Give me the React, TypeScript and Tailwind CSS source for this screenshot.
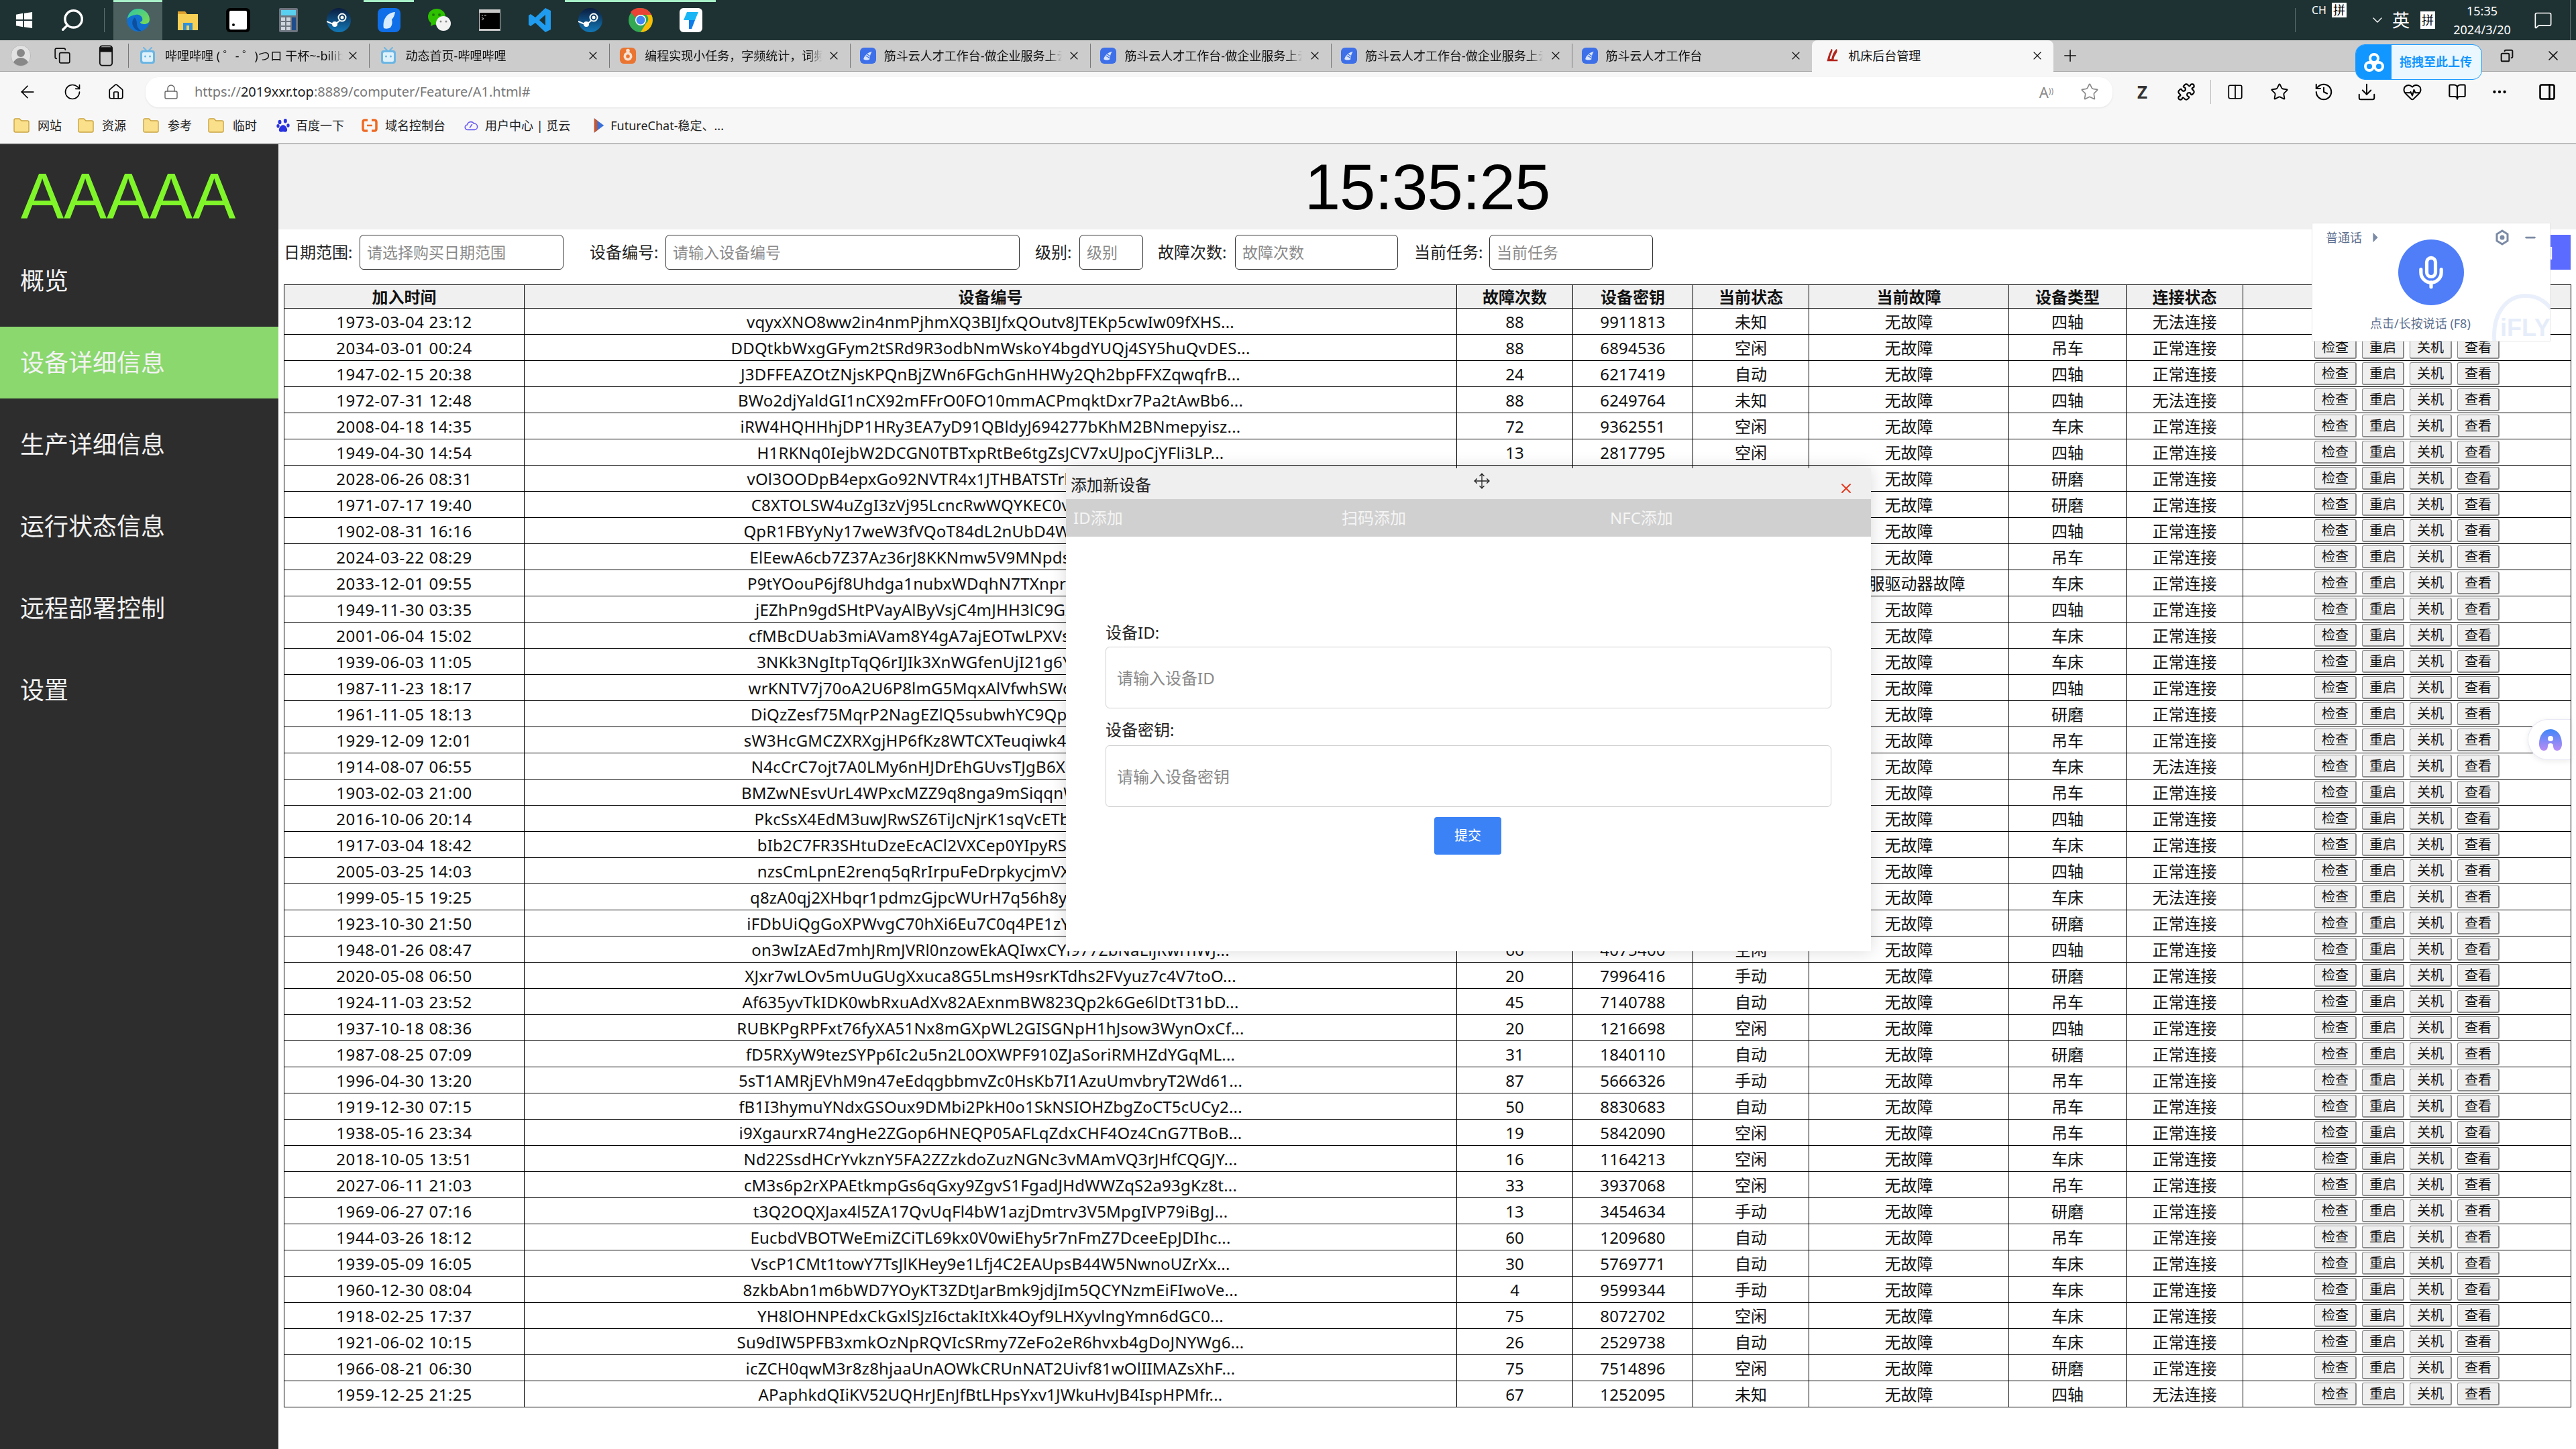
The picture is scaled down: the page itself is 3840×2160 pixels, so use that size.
import React from "react";
import { ArrowLeft, RotateCw, Home, Lock, Star, Puzzle, Columns2, History, Download, HeartPulse, BookOpen, MoreHorizontal, PanelRight, Copy, Mic, Minus, Move, Plus, X, ChevronDown, MessageSquare, Search } from "lucide-react";

const raw = `1973-03-04 23:12|vqyxXNO8ww2in4nmPjhmXQ3BIJfxQOutv8JTEKp5cwIw09fXHS...|88|9911813|未知|无故障|四轴|无法连接
2034-03-01 00:24|DDQtkbWxgGFym2tSRd9R3odbNmWskoY4bgdYUQj4SY5huQvDES...|88|6894536|空闲|无故障|吊车|正常连接
1947-02-15 20:38|J3DFFEAZOtZNjsKPQnBjZWn6FGchGnHHWy2Qh2bpFFXZqwqfrB...|24|6217419|自动|无故障|四轴|正常连接
1972-07-31 12:48|BWo2djYaldGI1nCX92mFFrO0FO10mmACPmqktDxr7Pa2tAwBb6...|88|6249764|未知|无故障|四轴|无法连接
2008-04-18 14:35|iRW4HQHHhjDP1HRy3EA7yD91QBldyJ694277bKhM2BNmepyisz...|72|9362551|空闲|无故障|车床|正常连接
1949-04-30 14:54|H1RKNq0IejbW2DCGN0TBTxpRtBe6tgZsJCV7xUJpoCjYFli3LP...|13|2817795|空闲|无故障|四轴|正常连接
2028-06-26 08:31|vOl3OODpB4epxGo92NVTR4x1JTHBATSTrkQm7dZs2LfYc8wUe...|41|5520713|空闲|无故障|研磨|正常连接
1971-07-17 19:40|C8XTOLSW4uZgI3zVj95LcncRwWQYKEC0vXb2TnH6pRa7sJd1F...|57|3318206|自动|无故障|研磨|正常连接
1902-08-31 16:16|QpR1FBYyNy17weW3fVQoT84dL2nUbD4WkE9sXc6ZtGm3HjA0r...|29|7045162|手动|无故障|四轴|正常连接
2024-03-22 08:29|ElEewA6cb7Z37Az36rJ8KKNmw5V9MNpdssT2yLq4HfUx1GcRz...|63|2281947|自动|无故障|吊车|正常连接
2033-12-01 09:55|P9tYOouP6jf8Uhdga1nubxWDqhN7TXnprK3vZs5LmE2cGy4Ab...|12|8457390|未知|伺服驱动器故障|车床|正常连接
1949-11-30 03:35|jEZhPn9gdSHtPVayAlByVsjC4mJHH3lC9GxT7wQ2rUe6Nk1Df...|78|6190534|空闲|无故障|四轴|正常连接
2001-06-04 15:02|cfMBcDUab3miAVam8Y4gA7ajEOTwLPXVs5Hq2ZnR9yKt6GuJe...|35|4726081|手动|无故障|车床|正常连接
1939-06-03 11:05|3NKk3NgItpTqQ6rIJIk3XnWGfenUjI21g6Ya7DcLv8SzP0mHw...|90|1937625|自动|无故障|车床|正常连接
1987-11-23 18:17|wrKNTV7j70oA2U6P8lmG5MqxAlVfwhSWoE3bRy9ZtJc1HnD4g...|46|5803274|空闲|无故障|四轴|正常连接
1961-11-05 18:13|DiQzZesf75MqrP2NagEZlQ5subwhYC9QpEV6kTx3LmG8jRn1F...|21|9264018|手动|无故障|研磨|正常连接
1929-12-09 12:01|sW3HcGMCZXRXgjHP6fKz8WTCXTeuqiwk4Ay7Dn2VbL5mQoE9r...|84|3650792|自动|无故障|吊车|正常连接
1914-08-07 06:55|N4cCrC7ojt7A0LMy6nHJDrEhGUvsTJgB6Xp1Zk9QaW3fYm2Sd...|52|7418936|未知|无故障|车床|无法连接
1903-02-03 21:00|BMZwNEsvUrL4WPxcMZZ9q8nga9mSiqqnWy5Hk3TfG7Dj1oRe2...|17|2095847|空闲|无故障|吊车|正常连接
2016-10-06 20:14|PkcSsX4EdM3uwJRwSZ6TiJcNjrK1sqVcETb8Yg2Ln7Ha5mQxD...|69|8136450|自动|无故障|四轴|正常连接
1917-03-04 18:42|bIb2C7FR3SHtuDzeEcACl2VXCep0YIpyRSMk6Wn9Gq4ZjLf1T...|38|4572619|手动|无故障|车床|正常连接
2005-03-25 14:03|nzsCmLpnE2renq5qRrIrpuFeDrpkycjmVXa7Wh3GtB1oJ9Ys6...|95|6801375|空闲|无故障|四轴|正常连接
1999-05-15 19:25|q8zA0qj2XHbqr1pdmzGjpcWUrH7q56h8y8LfT3nKv9EsDg4Mc...|26|1358904|未知|无故障|车床|无法连接
1923-10-30 21:50|iFDbUiQgGoXPWvgC70hXi6Eu7C0q4PE1zYm3Ra5SkLn8HwTd2...|73|9720168|自动|无故障|研磨|正常连接
1948-01-26 08:47|on3wIzAEd7mhJRmJVRl0nzowEkAQIwxCYi977ZbNaLijRwrnWJ...|66|4075400|空闲|无故障|四轴|正常连接
2020-05-08 06:50|XJxr7wLOv5mUuGUgXxuca8G5LmsH9srKTdhs2FVyuz7c4V7toO...|20|7996416|手动|无故障|研磨|正常连接
1924-11-03 23:52|Af635yvTkIDK0wbRxuAdXv82AExnmBW823Qp2k6Ge6lDtT31bD...|45|7140788|自动|无故障|吊车|正常连接
1937-10-18 08:36|RUBKPgRPFxt76fyXA51Nx8mGXpWL2GISGNpH1hJsow3WynOxCf...|20|1216698|空闲|无故障|四轴|正常连接
1987-08-25 07:09|fD5RXyW9tezSYPp6Ic2u5n2L0OXWPF910ZJaSoriRMHZdYGqML...|31|1840110|自动|无故障|研磨|正常连接
1996-04-30 13:20|5sT1AMRjEVhM9n47eEdqgbbmvZc0HsKb7I1AzuUmvbryT2Wd61...|87|5666326|手动|无故障|吊车|正常连接
1919-12-30 07:15|fB1I3hymuYNdxGSOux9DMbi2PkH0o1SkNSIOHZbgZoCT5cUCy2...|50|8830683|自动|无故障|吊车|正常连接
1938-05-16 23:34|i9XgaurxR74ngHe2ZGop6HNEQP05AFLqZdxCHF4Oz4CnG7TBoB...|19|5842090|空闲|无故障|吊车|正常连接
2018-10-05 13:51|Nd22SsdHCrYvkznY5FA2ZZzkdoZuzNGNc3vMAmVQ3rJHfCQGJY...|16|1164213|空闲|无故障|车床|正常连接
2027-06-11 21:03|cM3s6p2rXPAEtkmpGs6qGxy9ZgvS1FgadJHdWWZqS2a93gKz8t...|33|3937068|空闲|无故障|吊车|正常连接
1969-06-27 07:16|t3Q2OQXJax4l5ZA17QvUqFl4bW1azjDmtrv3V5MpgIVP79iBgJ...|13|3454634|手动|无故障|研磨|正常连接
1944-03-26 18:12|EucbdVBOTWeEmiZCiTL69kx0V0wiEhy5r7nFmZ7DceeEpJDIhc...|60|1209680|自动|无故障|吊车|正常连接
1939-05-09 16:05|VscP1CMt1towY7TsJlKHey9e1Lfj4C2EAUpsB44W5NwnoUZrXx...|30|5769771|自动|无故障|车床|正常连接
1960-12-30 08:04|8zkbAbn1m6bWD7YOyKT3ZDtJarBmk9jdjIm5QCYNzmEiFIwoVe...|4|9599344|手动|无故障|车床|正常连接
1918-02-25 17:37|YH8lOHNPEdxCkGxlSJzI6ctakItXk4Oyf9LHXyvlngYmn6dGC0...|75|8072702|空闲|无故障|车床|正常连接
1921-06-02 10:15|Su9dIW5PFB3xmkOzNpRQVIcSRmy7ZeFo2eR6hvxb4gDoJNYWg6...|26|2529738|自动|无故障|车床|正常连接
1966-08-21 06:30|icZCH0qwM3r8z8hjaaUnAOWkCRUnNAT2Uivf81wOlIIMAZsXhF...|75|7514896|空闲|无故障|研磨|正常连接
1959-12-25 21:25|APaphkdQIiKV52UQHrJEnJfBtLHpsYxv1JWkuHvJB4IspHPMfr...|67|1252095|未知|无故障|四轴|无法连接`;
const rows = raw.split("\n").map((l) => l.split("|"));
const cols = ["加入时间", "设备编号", "故障次数", "设备密钥", "当前状态", "当前故障", "设备类型", "连接状态", ""];
const widths = ["w-[358px]", "w-[1390px]", "w-[173px]", "w-[179px]", "w-[173px]", "w-[298px]", "w-[175px]", "w-[174px]", "w-[489px]"];
const track = ["tracking-[0.6px]", "tracking-[0.2px]", "", "tracking-[0.2px]", "", "", "", ""];

const Bili = () => (
  <svg viewBox="0 0 28 28" className="w-[28px] h-[28px] shrink-0"><path d="M8 2l4 4M20 2l-4 4" stroke="#6cb6e4" strokeWidth="2" strokeLinecap="round"/><rect x="3" y="6" width="22" height="20" rx="4" fill="#6cb6e4"/><rect x="6" y="9" width="16" height="14" rx="2" fill="#dff1fb"/><circle cx="10.5" cy="15" r="1.5" fill="#6cb6e4"/><circle cx="17.5" cy="15" r="1.5" fill="#6cb6e4"/></svg>
);
const Csdn = () => (
  <svg viewBox="0 0 28 28" className="w-[26px] h-[28px] shrink-0"><rect x="1" y="1" width="26" height="26" rx="7" fill="#ea7431"/><circle cx="14" cy="15" r="7" fill="#f8e2d2"/><circle cx="14" cy="6" r="3" fill="#f8e2d2"/><circle cx="14" cy="15" r="3" fill="#ea7431"/></svg>
);
const Jd = () => (
  <svg viewBox="0 0 28 28" className="w-[24px] h-[28px] shrink-0"><rect x="0" y="0" width="28" height="28" rx="7" fill="#3d6fe8"/><path d="M6 20c2-7 8-12 15-13-3 3-4 9-4 13-3 2-8 2-11 0z" fill="#dbe6ff"/><path d="M10 14l8 5M12 11l7 5" stroke="#3d6fe8" strokeWidth="1.4"/></svg>
);
const Red = () => (
  <svg viewBox="0 0 24 28" className="w-[20px] h-[28px] shrink-0"><path d="M3 24C5 14 8 7 11 2c2 0 2 3 1 5-2 5-4 9-4 13h3c1-6 4-14 9-18 2 2 1 6-1 9-2 3-4 6-4 10h7v3z" fill="#b3261e"/></svg>
);

const tabs: [React.ReactNode, string][] = [
  [<Bili />, "哔哩哔哩 ( ゜- ゜)つロ 干杯~-bilibili"],
  [<Bili />, "动态首页-哔哩哔哩"],
  [<Csdn />, "编程实现小任务，字频统计，词频统计"],
  [<Jd />, "筋斗云人才工作台-做企业服务上云"],
  [<Jd />, "筋斗云人才工作台-做企业服务上云"],
  [<Jd />, "筋斗云人才工作台-做企业服务上云"],
  [<Jd />, "筋斗云人才工作台"],
];

const Edge = () => (
  <svg viewBox="0 0 36 36" className="w-[36px] h-[36px]"><defs><linearGradient id="eg" x1="0" y1="0" x2="1" y2="1"><stop offset="0" stopColor="#2fc5a0"/><stop offset="1" stopColor="#7ddc52"/></linearGradient></defs><circle cx="18" cy="18" r="17" fill="#1170cf"/><path d="M2 16C3 7 10 1 18 1c9 0 17 7 17 16 0 5-4 7-8 7-3 0-6-1-6-3 3-1 4-3 3-6-1-4-6-6-10-5-6 1-10 3-12 6z" fill="url(#eg)"/><path d="M13 14c-4 3-5 9-2 14 2 4 7 7 12 6-4-2-7-6-7-11 0-3-1-6-3-9z" fill="#0c4f9e"/></svg>
);
const Files = () => (
  <svg viewBox="0 0 36 36" className="w-[36px] h-[36px]"><path d="M3 5h11l3 4h16v5H3z" fill="#e0a32e"/><rect x="3" y="9" width="30" height="24" fill="#f7cf55"/><rect x="11" y="22" width="14" height="11" fill="#2f8fd8"/><rect x="16" y="26" width="4" height="7" fill="#f7cf55"/></svg>
);
const Slate = () => (
  <svg viewBox="0 0 36 36" className="w-[36px] h-[36px]"><rect x="0" y="0" width="36" height="36" rx="6" fill="#000"/><rect x="5" y="4" width="26" height="28" rx="2" fill="#fff"/><circle cx="11" cy="25" r="2" fill="#000"/></svg>
);
const Calc = () => (
  <svg viewBox="0 0 36 36" className="w-[36px] h-[36px]"><rect x="4" y="0" width="28" height="36" rx="2" fill="#6d7580"/><rect x="7" y="3" width="22" height="8" fill="#5ad0f0"/><g fill="#cfd5dc"><rect x="7" y="14" width="6" height="5"/><rect x="15" y="14" width="6" height="5"/><rect x="7" y="21" width="6" height="5"/><rect x="15" y="21" width="6" height="5"/><rect x="7" y="28" width="6" height="5"/><rect x="15" y="28" width="6" height="5"/></g><rect x="23" y="14" width="6" height="19" fill="#1f4d8c"/></svg>
);
const Steam = () => (
  <svg viewBox="0 0 36 36" className="w-[36px] h-[36px]"><defs><linearGradient id="st" x1="0" y1="0" x2="0" y2="1"><stop offset="0" stopColor="#0b1c3e"/><stop offset="1" stopColor="#1279b8"/></linearGradient></defs><circle cx="18" cy="18" r="18" fill="url(#st)"/><circle cx="23" cy="14" r="5.5" fill="none" stroke="#fff" strokeWidth="2"/><circle cx="23" cy="14" r="2.5" fill="#fff"/><circle cx="12" cy="24" r="4" fill="#fff"/><path d="M0 20l12 5 8-7" stroke="#fff" strokeWidth="2" fill="none"/></svg>
);
const Feather = () => (
  <svg viewBox="0 0 36 36" className="w-[36px] h-[36px]"><rect x="1" y="0" width="34" height="36" rx="8" fill="#0f6fe8"/><path d="M10 30C8 18 14 7 27 6c-1 5-2 8-5 11 1 4 1 8-2 12-3 2-7 2-10 1z" fill="#d8ecff"/></svg>
);
const Wechat = () => (
  <svg viewBox="0 0 36 36" className="w-[36px] h-[36px]"><ellipse cx="14" cy="13" rx="13" ry="12" fill="#2dc100"/><path d="M6 21l-1 6 6-3z" fill="#2dc100"/><ellipse cx="24" cy="23" rx="11" ry="11" fill="#f2f2f2"/><circle cx="9" cy="10" r="2" fill="#1e7d00"/><circle cx="18" cy="10" r="2" fill="#1e7d00"/><circle cx="20" cy="20" r="1.5" fill="#888"/><circle cx="28" cy="20" r="1.5" fill="#888"/></svg>
);
const Cmd = () => (
  <svg viewBox="0 0 36 36" className="w-[36px] h-[36px]"><rect x="2" y="2" width="32" height="32" fill="#c8c8c8"/><rect x="3" y="7" width="30" height="24" fill="#000"/><path d="M6 11h2M10 11h3M6 14l3 2-3 2" stroke="#ccc" fill="none"/></svg>
);
const Code = () => (
  <svg viewBox="0 0 36 36" className="w-[36px] h-[36px]"><path d="M26 0l8 4v28l-8 4-15-14-7 5-3-2V11l3-2 7 5zM26 10l-9 8 9 8z" fill="#1f9cf0"/></svg>
);
const Chrome = () => (
  <svg viewBox="0 0 36 36" className="w-[36px] h-[36px]"><circle cx="18" cy="18" r="18" fill="#34a853"/><path d="M18 0a18 18 0 0 1 16 10H18a8 8 0 0 0-8 4L3 6A18 18 0 0 1 18 0z" fill="#ea4335"/><path d="M34 10a18 18 0 0 1-16 26l8-13a8 8 0 0 0 0-13z" fill="#fbbc05"/><circle cx="18" cy="18" r="8" fill="#fff"/><circle cx="18" cy="18" r="6.5" fill="#4285f4"/></svg>
);
const Feishu = () => (
  <svg viewBox="0 0 36 36" className="w-[36px] h-[36px]"><rect x="1" y="0" width="34" height="36" rx="6" fill="#fff"/><path d="M12 6h17l-5 12H7z" fill="#19b6f6"/><path d="M15 18h9l-5 13h-4z" fill="#0e7de8"/></svg>
);
const Win = () => (
  <svg viewBox="0 0 28 28" className="w-[26px] h-[26px]"><path d="M1 5l11-2v10H1zM14 3l13-2v12H14zM1 15h11v10L1 23zM14 15h13v12l-13-2z" fill="#fff"/></svg>
);
const Folder = () => (
  <svg viewBox="0 0 24 24" className="w-[24px] h-[24px] shrink-0"><path d="M1 4q0-2 2-2h6l3 3h9q2 0 2 2v13q0 2-2 2H3q-2 0-2-2z" fill="#fbe08c" stroke="#c9a33e" strokeWidth="1.4"/></svg>
);
const Baidu = () => (
  <svg viewBox="0 0 24 28" className="w-[20px] h-[26px] shrink-0" fill="#2932e1"><ellipse cx="6" cy="8" rx="3" ry="4"/><ellipse cx="16" cy="6" rx="3" ry="4"/><ellipse cx="3" cy="15" rx="2.6" ry="3.4"/><ellipse cx="21" cy="14" rx="2.6" ry="3.4"/><path d="M12 13c4 0 9 7 7 11-2 3-5 1-7 1s-5 2-7-1c-2-4 3-11 7-11z"/></svg>
);
const Ali = () => (
  <svg viewBox="0 0 24 24" className="w-[24px] h-[24px] shrink-0" fill="none" stroke="#ee6a24" strokeWidth="3.5"><path d="M9 4H5q-3 0-3 3v10q0 3 3 3h4M15 4h4q3 0 3 3v10q0 3-3 3h-4"/><path d="M8 12h8" strokeWidth="2.5"/></svg>
);
const Cloud = () => (
  <svg viewBox="0 0 24 24" className="w-[22px] h-[22px] shrink-0" fill="none" stroke="#6a5cf0" strokeWidth="1.8"><path d="M7 19a4 4 0 0 1-1-8 6 6 0 0 1 11-2 5 5 0 0 1 1 10z"/><path d="M10 16l4-6"/></svg>
);
const Play = () => (
  <svg viewBox="0 0 20 28" className="w-[18px] h-[28px] shrink-0"><path d="M2 2l16 12-16 12z" fill="#3b6fd8"/><path d="M2 2v24l5-4V6z" fill="#c8552b"/></svg>
);
const TabsIcon = () => (
  <svg viewBox="0 0 24 36" className="w-[22px] h-[34px]" fill="none" stroke="#111" strokeWidth="2"><rect x="2" y="2" width="20" height="32" rx="4"/><path d="M3 5h18v6H3z" fill="#111"/></svg>
);

function TaskIcon({ on, children }: { on?: boolean; children: React.ReactNode }) {
  return (
    <div className={`w-[75px] h-[60px] flex items-center justify-center border-t-[3px] ${on ? "border-[#a8f0c8]" : "border-transparent"}`}>
      <div className="-mt-[3px]">{children}</div>
    </div>
  );
}

function TaskBar() {
  return (
    <div className="h-[60px] bg-[#1f3233] flex items-center shrink-0 text-white">
      <div className="w-[72px] flex justify-center"><Win /></div>
      <div className="w-[72px] flex justify-center"><Search size={38} strokeWidth={2.2} className="-scale-x-100" /></div>
      <div className="w-px h-[36px] bg-[#617070] ml-[11px] mr-[13px]" />
      <div className="w-[73px] h-[60px] bg-[#4c6060] border-t-[3px] border-[#a8f0c8] flex items-center justify-center"><div className="-mt-[3px]"><Edge /></div></div>
      <TaskIcon><Files /></TaskIcon>
      <TaskIcon><Slate /></TaskIcon>
      <TaskIcon><Calc /></TaskIcon>
      <TaskIcon><Steam /></TaskIcon>
      <TaskIcon on><Feather /></TaskIcon>
      <TaskIcon><Wechat /></TaskIcon>
      <TaskIcon><Cmd /></TaskIcon>
      <TaskIcon><Code /></TaskIcon>
      <TaskIcon on><Steam /></TaskIcon>
      <TaskIcon on><Chrome /></TaskIcon>
      <TaskIcon on><Feishu /></TaskIcon>
      <div className="ml-auto flex items-center h-[60px] pr-[8px]">
        <div className="w-px h-[36px] bg-[#617070] mr-[24px]" />
        <div className="flex items-start h-[60px] pt-[4px] gap-[8px] w-[86px]">
          <span className="text-[16px] leading-[22px]">CH</span>
          <span className="bg-white text-black text-[18px] leading-[22px] px-[2px]">拼</span>
        </div>
        <ChevronDown size={24} strokeWidth={1.4} />
        <span className="text-[26px] ml-[10px]">英</span>
        <span className="bg-white text-black text-[18px] leading-[26px] px-[2px] ml-[16px]">拼</span>
        <div className="flex flex-col items-center w-[96px] ml-[22px] text-[18px] leading-[28px]">
          <span>15:35</span>
          <span>2024/3/20</span>
        </div>
        <MessageSquare size={28} strokeWidth={1.4} className="ml-[29px]" />
        <div className="w-px h-[60px] bg-[#617070] ml-[26px]" />
      </div>
    </div>
  );
}

function TabBar() {
  return (
    <div className="h-[47px] bg-[#cccccc] flex items-center shrink-0 border-b border-[#aaaaaa] text-[18px] text-[#111]">
      <div className="w-[62px] flex justify-center">
        <div className="w-[30px] h-[32px] rounded-full bg-[#e2e2e2] border border-[#bbb] flex flex-col items-center justify-end overflow-hidden">
          <div className="w-[12px] h-[12px] rounded-full bg-[#888]" />
          <div className="w-[24px] h-[12px] rounded-t-full bg-[#888] mt-px" />
        </div>
      </div>
      <div className="w-[62px] flex justify-center"><Copy size={26} strokeWidth={1.6} /></div>
      <div className="w-[67px] flex justify-center"><TabsIcon /></div>
      {tabs.map(([ic, t], i) => (
        <div key={i} className="w-[358.6px] h-[36px] shrink-0 flex items-center border-l border-[#777] pl-[14px] pr-[14px]">
          {ic}
          <span className="ml-[12px] w-[265px] whitespace-nowrap overflow-hidden [mask-image:linear-gradient(to_right,#000_92%,transparent)]">{t}</span>
          <X size={20} strokeWidth={1.4} className="ml-auto" />
        </div>
      ))}
      <div className="w-[360px] h-[47px] shrink-0 bg-[#f7f7f7] rounded-t-[8px] flex items-center pl-[20px] pr-[14px]">
        <Red />
        <span className="ml-[14px]">机床后台管理</span>
        <X size={20} strokeWidth={1.4} className="ml-auto" />
      </div>
      <Plus size={28} strokeWidth={1.4} className="ml-[11px]" />
      <Copy size={20} strokeWidth={2.4} className="ml-[627px] -scale-x-100" />
      <X size={24} strokeWidth={1.6} className="ml-[47px]" />
    </div>
  );
}

function AddressBar() {
  return (
    <div className="bg-[#f7f7f7] shrink-0 border-b-2 border-[#bdbdbd] h-[108px]">
      <div className="h-[60px] flex items-center">
        <div className="w-[82px] flex justify-center"><ArrowLeft size={30} strokeWidth={1.4} /></div>
        <div className="w-[52px] flex justify-center"><RotateCw size={28} strokeWidth={1.4} /></div>
        <div className="w-[78px] flex justify-center"><Home size={26} strokeWidth={1.6} /></div>
        <div className="ml-[5px] w-[2932px] h-[45px] rounded-[20px] bg-white flex items-center shadow-[0_1px_3px_rgba(0,0,0,0.08)]">
          <Lock size={24} strokeWidth={1.4} className="ml-[26px] text-[#666]" />
          <span className="ml-[23px] text-[20px] text-[#777]">https://<span className="text-[#222]">2019xxr.top</span>:8889/computer/Feature/A1.html#</span>
          <span className="ml-auto text-[22px] text-[#888]">A<sup className="text-[12px]">))</sup></span>
          <Star size={28} strokeWidth={1.4} className="ml-[40px] mr-[20px] text-[#888]" />
        </div>
        <span className="ml-[37px] text-[26px] font-bold text-[#333]">Z</span>
        <Puzzle size={28} strokeWidth={1.8} className="ml-[44px]" />
        <div className="w-px h-[36px] bg-[#bbb] ml-[22px]" />
        <Columns2 size={26} strokeWidth={1.6} className="ml-[23px]" />
        <Star size={28} strokeWidth={1.6} className="ml-[39px]" />
        <History size={30} strokeWidth={1.6} className="ml-[37px]" />
        <Download size={30} strokeWidth={1.6} className="ml-[34px]" />
        <HeartPulse size={30} strokeWidth={1.6} className="ml-[38px]" />
        <BookOpen size={28} strokeWidth={1.8} className="ml-[38px]" />
        <MoreHorizontal size={26} strokeWidth={2} className="ml-[36px]" />
        <PanelRight size={28} strokeWidth={2.2} className="ml-[44px]" />
      </div>
      <div className="h-[40px] flex items-center text-[18px] text-[#222] pl-[20px]">
        <Folder /><span className="ml-[12px]">网站</span>
        <span className="ml-[24px]"><Folder /></span><span className="ml-[12px]">资源</span>
        <span className="ml-[25px]"><Folder /></span><span className="ml-[13px]">参考</span>
        <span className="ml-[24px]"><Folder /></span><span className="ml-[13px]">临时</span>
        <span className="ml-[29px]"><Baidu /></span><span className="ml-[9px]">百度一下</span>
        <span className="ml-[26px]"><Ali /></span><span className="ml-[11px]">域名控制台</span>
        <span className="ml-[27px]"><Cloud /></span><span className="ml-[10px]">用户中心 | 觅云</span>
        <span className="ml-[34px]"><Play /></span><span className="ml-[8px]">FutureChat-稳定、...</span>
      </div>
    </div>
  );
}

const nav = ["概览", "设备详细信息", "生产详细信息", "运行状态信息", "远程部署控制", "设置"];
function Sidebar() {
  return (
    <div className="w-[415px] h-full bg-[#2d2d2d] shrink-0">
      <div className="h-[150px] pl-[31px] pt-[22px]">
        <div className="text-[96px] leading-[110px] text-[#7ff52a] [font-family:'Liberation_Sans',sans-serif]">AAAAA</div>
      </div>
      <div className="flex flex-col gap-[15px]">
        {nav.map((n, i) => (
          <div key={n} className={`h-[107px] flex items-center pl-[30px] text-[36px] text-[#f2f2f2] ${i === 1 ? "bg-[#8ad86e]" : ""}`}>{n}</div>
        ))}
      </div>
    </div>
  );
}

const inp = "h-[52px] border border-[#333] rounded-[6px] pl-[10px] outline-none bg-white placeholder:text-[#8a8a8a] text-[23px]";
function Filters() {
  return (
    <div className="h-[82px] flex items-start pt-[8px] pl-[8px] text-[24px] text-[#222]">
      <div className="h-[52px] flex items-center w-[113px]">日期范围:</div>
      <input className={`${inp} w-[304px]`} placeholder="请选择购买日期范围" />
      <div className="h-[52px] flex items-center w-[113px] ml-[39px]">设备编号:</div>
      <input className={`${inp} w-[528px]`} placeholder="请输入设备编号" />
      <div className="h-[52px] flex items-center w-[66px] ml-[23px]">级别:</div>
      <input className={`${inp} w-[95px]`} placeholder="级别" />
      <div className="h-[52px] flex items-center w-[115px] ml-[22px]">故障次数:</div>
      <input className={`${inp} w-[243px]`} placeholder="故障次数" />
      <div className="h-[52px] flex items-center w-[112px] ml-[24px]">当前任务:</div>
      <input className={`${inp} w-[244px]`} placeholder="当前任务" />
      <button className="ml-auto mr-[8px] w-[130px] h-[52px] bg-[#5b6bff] text-white text-[24px] text-right pr-[26px]">添加</button>
    </div>
  );
}

function DataTable() {
  return (
    <table className="table-fixed border-collapse ml-[8px] w-[3409px] text-[24px] text-[#111] text-center">
      <colgroup>{widths.map((w, i) => <col key={i} className={w} />)}</colgroup>
      <thead>
        <tr className="h-[35px] bg-[#f0f0f0]">
          {cols.map((c, i) => <th key={i} className="border border-black font-bold leading-[30px] p-0 pt-[2px]">{c}</th>)}
        </tr>
      </thead>
      <tbody>
        {rows.map((r, ri) => (
          <tr key={ri} className="h-[39px]">
            {r.map((c, i) => <td key={i} className={`border border-black p-0 pt-[2px] leading-[30px] whitespace-nowrap overflow-hidden ${track[i]}`}>{c}</td>)}
            <td className="border border-black p-0">
              <div className="flex justify-center gap-[8px]">
                {["检查", "重启", "关机", "查看"].map((b) => (
                  <button key={b} className="w-[63px] h-[34px] bg-[#efefef] border border-[#8a8a8a] rounded-[3px] text-[20px] leading-[30px] text-[#111] border-b-2 border-r-2">{b}</button>
                ))}
              </div>
            </td>
          </tr>
        ))}
      </tbody>
    </table>
  );
}

function Modal() {
  return (
    <div className="absolute left-[1589px] top-[698px] w-[1200px] h-[720px] bg-white shadow-[0_0_24px_rgba(0,0,0,0.15)] text-[24px]">
      <div className="h-[46px] bg-[#efefef] flex items-center px-[7px] text-[#222] relative">
        <span className="pt-[4px]">添加新设备</span>
        <Move size={26} strokeWidth={1.2} className="absolute left-[607px] top-[6px]" />
        <X size={24} strokeWidth={2} className="ml-auto mr-[18px] mt-[14px] text-[#e5391f]" />
      </div>
      <div className="h-[56px] bg-[#d0d0d0] flex items-center text-[#f5f5f5]">
        <div className="w-[400px] pl-[11px]">ID添加</div>
        <div className="w-[400px] pl-[11px]">扫码添加</div>
        <div className="w-[400px] pl-[11px]">NFC添加</div>
      </div>
      <div className="px-[59px] pt-[127px] text-[#222]">
        <div className="h-[37px] leading-[32px]">设备ID:</div>
        <input className="w-full h-[92px] border border-[#cfcfcf] rounded-[6px] pl-[16px] outline-none placeholder:text-[#8a8a8a]" placeholder="请输入设备ID" />
        <div className="h-[55px] pt-[16px] leading-[32px]">设备密钥:</div>
        <input className="w-full h-[92px] border border-[#cfcfcf] rounded-[6px] pl-[16px] outline-none placeholder:text-[#8a8a8a]" placeholder="请输入设备密钥" />
        <div className="flex justify-center mt-[15px]">
          <button className="w-[100px] h-[56px] bg-[#3b82f6] rounded-[4px] text-white text-[20px] -translate-x-[1px]">提交</button>
        </div>
      </div>
    </div>
  );
}

function Ifly() {
  return (
    <div className="absolute left-[3446px] top-[332px] w-[356px] h-[177px] bg-white border border-[#e6e6e6] overflow-hidden text-[#5d6f8e] text-[18px]">
      <svg viewBox="0 0 96 80" className="absolute left-[266px] top-[104px] w-[96px] h-[80px]" fill="none" stroke="#eaf0fb" strokeWidth="6"><path d="M6 78C0 30 24 4 52 4c18 0 30 8 40 22"/></svg>
      <div className="absolute left-[280px] top-[136px] text-[36px] leading-[40px] font-bold text-[#e6edfa] [font-family:'Liberation_Sans',sans-serif]">iFLY</div>
      <div className="relative flex items-center pt-[4px] pl-[20px] pr-[18px] h-[38px]">
        <span>普通话</span>
        <svg viewBox="0 0 8 20" className="w-[8px] h-[18px] ml-[16px]"><path d="M0 2l8 8-8 8z" fill="#7b8aa5"/></svg>
        <svg viewBox="0 0 20 24" className="w-[20px] h-[24px] ml-auto" fill="none" stroke="#7b8aa5" strokeWidth="3"><path d="M10 2l8 5v10l-8 5-8-5V7z"/><circle cx="10" cy="12" r="2" fill="#7b8aa5"/></svg>
        <Minus size={22} strokeWidth={3} className="ml-[21px] text-[#7b8aa5]" />
      </div>
      <div className="relative flex justify-center -mt-[14px]">
        <div className="w-[98px] h-[98px] rounded-full bg-[#4f7ef8] flex items-center justify-center"><Mic size={52} strokeWidth={2.4} color="#fff" /></div>
      </div>
      <div className="relative mt-[15px] pl-[86px] leading-[24px]">点击/长按说话 (F8)</div>
    </div>
  );
}

export default function App() {
  return (
    <div className="relative w-screen h-screen overflow-hidden flex flex-col bg-white [font-family:'Noto_Sans','Noto_Sans_CJK_SC',sans-serif]">
      <TaskBar />
      <TabBar />
      <AddressBar />
      <div className="flex-1 flex min-h-0">
        <Sidebar />
        <div className="flex-1 min-w-0">
          <div className="h-[127px] bg-[#f0f0f0] flex items-center justify-center text-[96px] tracking-[-1px] text-black [font-family:'Liberation_Sans',sans-serif]">15:35:25</div>
          <Filters />
          <DataTable />
        </div>
      </div>
      <Modal />
      <Ifly />
      <div className="absolute left-[3511px] top-[66px] w-[189px] h-[53px] rounded-[14px] border border-[#1e9bff] bg-[#eaf7ff] flex items-center overflow-hidden">
        <div className="w-[53px] h-full bg-[#1296ff] flex items-center justify-center">
          <svg viewBox="0 0 32 32" className="w-[32px] h-[32px]" fill="none" stroke="#fff" strokeWidth="4"><circle cx="16" cy="10" r="6"/><circle cx="9" cy="22" r="6"/><circle cx="23" cy="22" r="6"/></svg>
        </div>
        <span className="ml-[12px] text-[18px] font-bold text-[#1296ff] whitespace-nowrap">拖拽至此上传</span>
      </div>
      <div className="absolute left-[3768px] top-[1072px] w-[64px] h-[61px] rounded-l-full bg-white border border-r-0 border-[#e8e8f6] shadow-[0_2px_8px_rgba(0,0,0,0.08)] flex items-center pl-[16px]">
        <svg viewBox="0 0 34 32" className="w-[34px] h-[32px]"><defs><linearGradient id="fl" x1="0" y1="0" x2="0" y2="1"><stop offset="0" stopColor="#3f86f8"/><stop offset="1" stopColor="#b98cf6"/></linearGradient></defs><path d="M17 0C7 0 0 9 0 22c0 6 3 10 7 10 5 0 6-4 6-8 0-2 2-3 4-3s4 1 4 3c0 4 1 8 6 8 4 0 7-4 7-10C34 9 27 0 17 0z" fill="url(#fl)"/><circle cx="17" cy="14" r="4" fill="#fff"/></svg>
      </div>
    </div>
  );
}
